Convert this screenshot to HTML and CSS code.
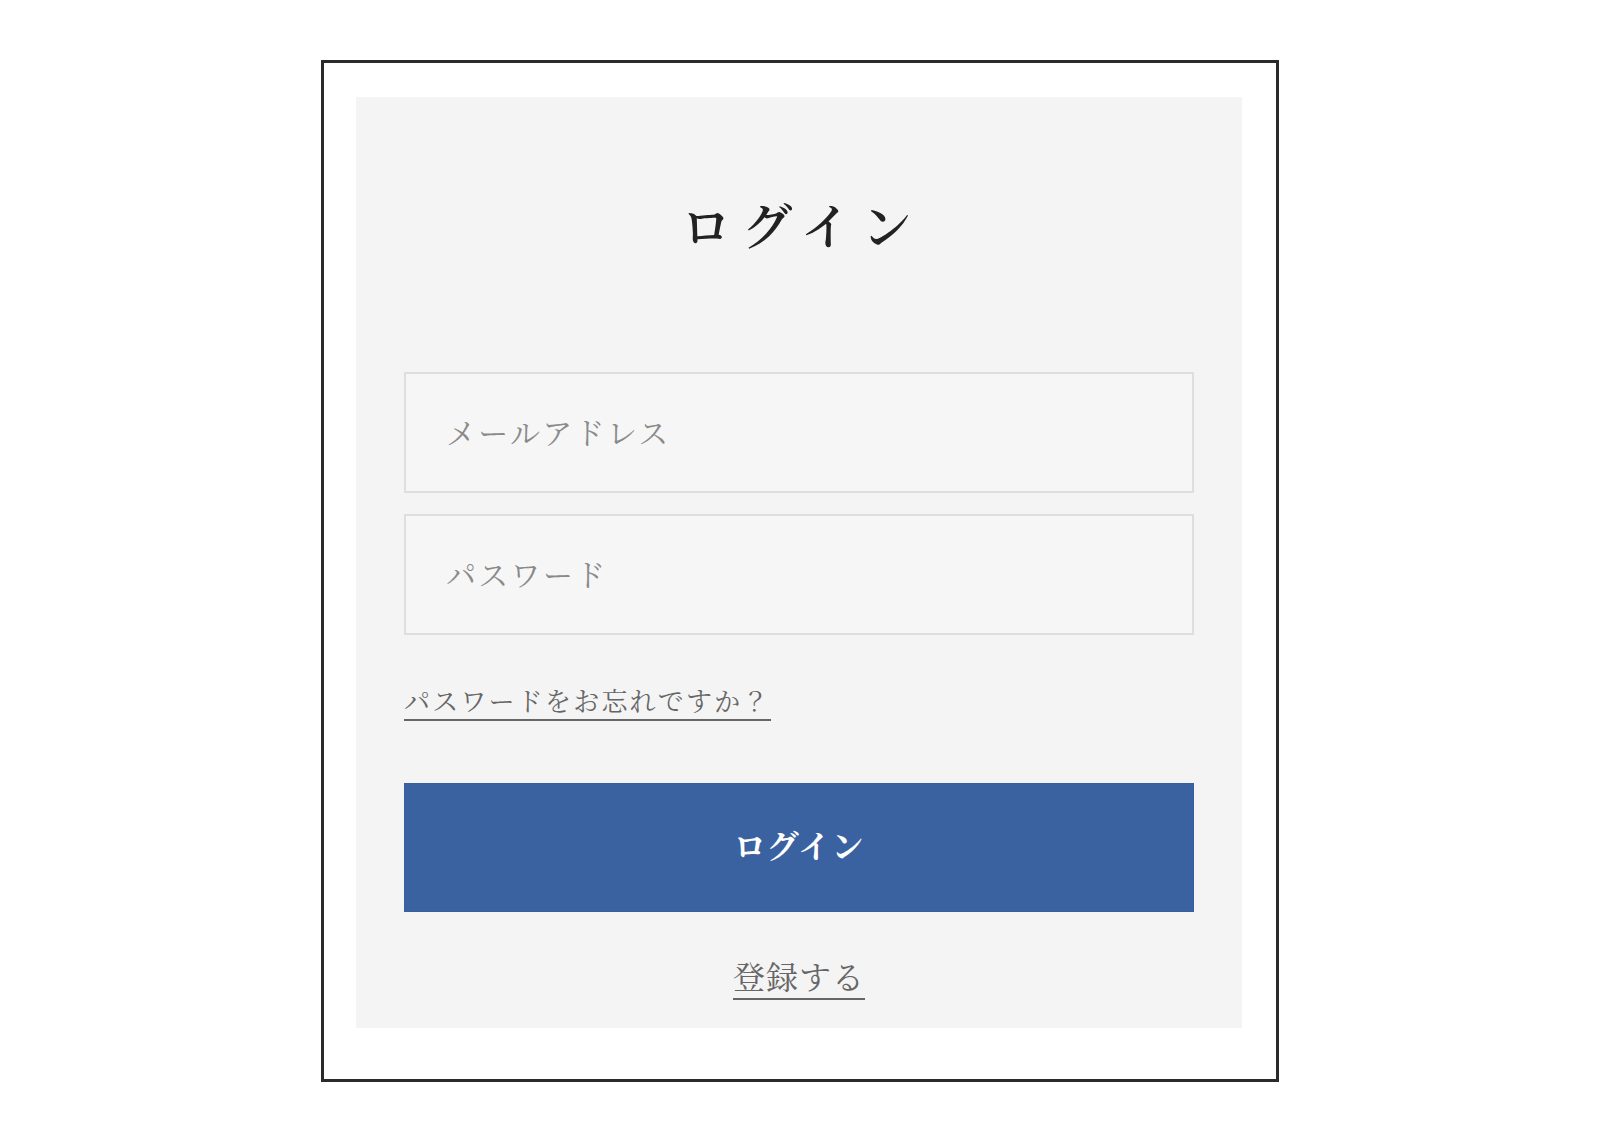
FILE: index.html
```html
<!DOCTYPE html>
<html lang="ja">
<head>
    <meta charset="UTF-8">
    <meta name="viewport" content="width=device-width, initial-scale=1.0">
    <title>ログイン</title>
    <link rel="stylesheet" href="styles.css">
</head>
<body>
    <div class="frame">
        <form class="login" id="login-form">
            <h1>ログイン</h1>
            <div class="fields">
                <input type="email" id="email" placeholder="メールアドレス">
                <input type="password" id="password" placeholder="パスワード">
            </div>
            <div class="forgot">
                <a href="#">パスワードをお忘れですか？</a>
            </div>
            <button type="submit">ログイン</button>
            <div class="register">
                <a href="#">登録する</a>
            </div>
        </form>
    </div>
</body>
</html>
```

FILE: styles.css
```css
body {
    margin: 0;
    background: #fff;
    font-family: "Noto Serif CJK JP", "Noto Sans CJK JP", serif;
}
.frame {
    width: 958px;
    box-sizing: border-box;
    margin: 60px auto 0;
    border: 3px solid #2b2b2b;
    padding: 34px 34px 51px 32px;
}
.login {
    background: #f4f4f4;
    padding: 101px 48px 28px;
}
h1 {
    margin: 0 0 124px;
    font-size: 50px;
    line-height: 50px;
    font-weight: 600;
    letter-spacing: 11px;
    text-indent: 6px;
    color: #222;
    text-align: center;
}
.fields {
    display: flex;
    flex-direction: column;
    gap: 21px;
}
input {
    height: 121px;
    box-sizing: border-box;
    border: 2px solid #dedede;
    background: #f6f6f6;
    padding: 0 40px 4px;
    font-family: inherit;
    font-size: 30px;
    letter-spacing: 2.3px;
    color: #333;
    outline: none;
    border-radius: 0;
}
input::placeholder {
    color: #8a8a8a;
}
.forgot {
    margin-top: 51px;
}
a {
    display: inline-block;
    color: #666;
    text-decoration: none;
    border-bottom: 2px solid #666;
}
.forgot a {
    font-size: 26px;
    line-height: 28px;
    letter-spacing: 2.2px;
    padding-bottom: 5px;
}
button {
    display: block;
    width: 100%;
    height: 129px;
    margin-top: 62px;
    padding: 0 0 8px;
    border: 1px solid #3560a0;
    background: #3b62a0;
    color: #fff;
    font-family: inherit;
    font-size: 32px;
    font-weight: 700;
    letter-spacing: 1px;
    cursor: pointer;
}
.register {
    margin-top: 46px;
    text-align: center;
}
.register a {
    font-size: 32px;
    line-height: 34px;
    letter-spacing: 1px;
    padding-bottom: 6px;
}
```
